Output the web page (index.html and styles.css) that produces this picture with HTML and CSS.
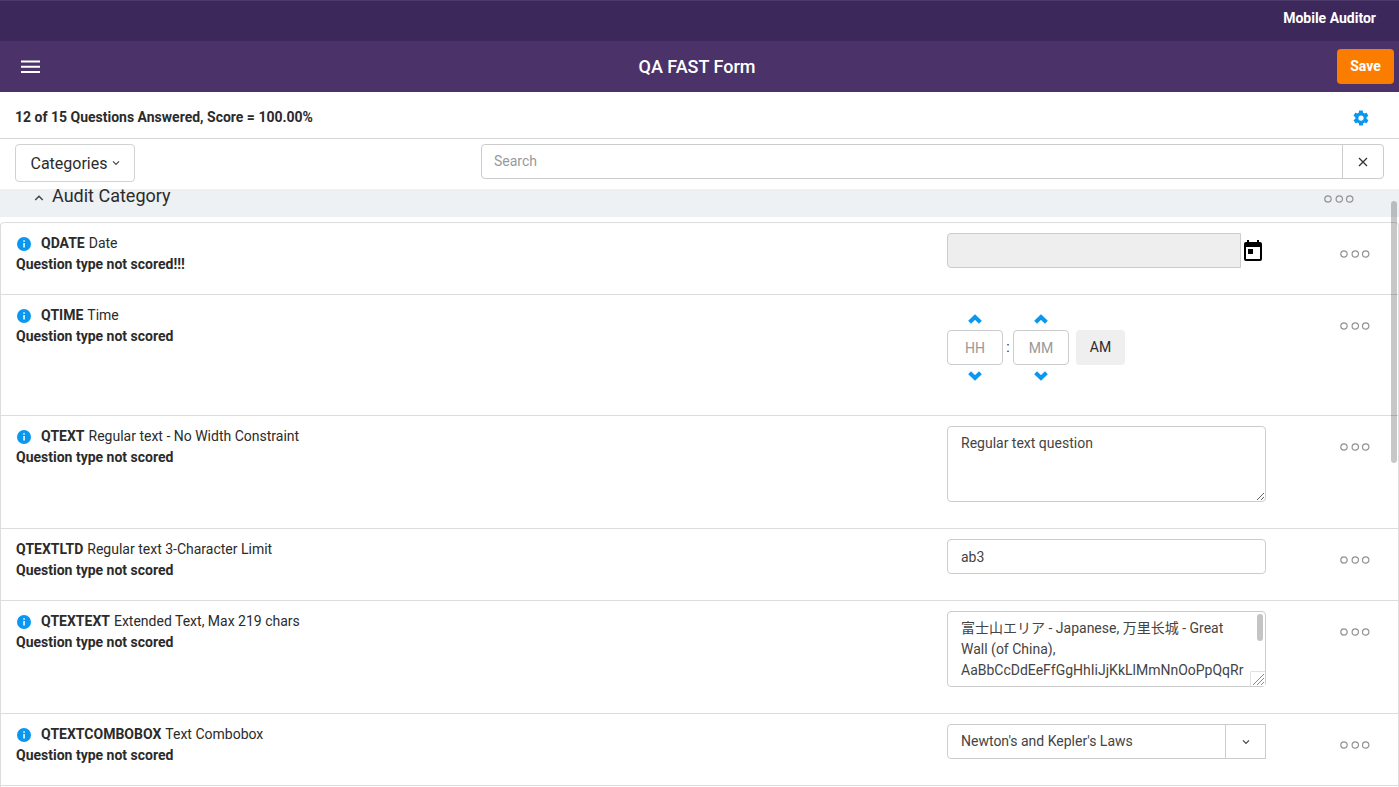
FILE: index.html
```html
<!DOCTYPE html>
<html lang="en">
<head>
    <meta charset="UTF-8">
    <meta name="viewport" content="width=device-width, initial-scale=1.0">
    <title>QA FAST Form</title>
    <link rel="stylesheet" href="styles.css">
</head>
<body>
    <svg class="sprite" width="0" height="0" aria-hidden="true">
        <symbol id="icon-info" viewBox="0 0 14 14">
            <circle cx="7" cy="7" r="7" fill="#0a97f0"/>
            <path d="M6.3 3.2h1.5v1.5H6.3zM6.3 6h1.5v4.4H6.3z" fill="#fff"/>
        </symbol>
        <symbol id="icon-more" viewBox="0 0 32 8">
            <g fill="none" stroke="#929292" stroke-width="1.2">
                <circle cx="4" cy="4" r="3.2"/>
                <circle cx="15.3" cy="4" r="3.2"/>
                <circle cx="25.7" cy="4" r="3.2"/>
            </g>
        </symbol>
        <symbol id="icon-down" viewBox="0 0 8 6">
            <path d="M1 1.4l3 3 3-3" fill="none" stroke="#444" stroke-width="1.2"/>
        </symbol>
        <symbol id="icon-step" viewBox="0 0 14 10">
            <path d="M1.600 8.300L7 3l5.400 5.300" fill="none" stroke="#0a97f0" stroke-width="4"/>
        </symbol>
    </svg>

    <header>
        <div class="topbar">Mobile Auditor</div>
        <div class="navbar">
            <button class="menu-button" aria-label="Menu">
                <svg width="20" height="14" viewBox="0 0 20 14"><path d="M0 1.500h19M0 6.700h19M0 11.900h19" stroke="#fff" stroke-width="2"/></svg>
            </button>
            <h1>QA FAST Form</h1>
            <button class="save-button">Save</button>
        </div>
    </header>

    <div class="status">
        <span>12 of 15 Questions Answered, Score = 100.00%</span>
        <button class="icon-button" aria-label="Settings">
            <svg width="18" height="18" viewBox="0 0 24 24"><path fill="#0a97f0" d="M19.4 13c0-.3.1-.6.1-1s0-.7-.1-1l2.100-1.600c.2-.2.300-.5.100-.7l-2-3.400c-.1-.2-.4-.3-.6-.2l-2.500 1c-.5-.4-1.100-.7-1.700-1l-.4-2.600c0-.3-.2-.5-.5-.5h-4c-.3 0-.5.2-.5.4l-.4 2.700c-.6.2-1.100.6-1.700 1l-2.500-1c-.2-.1-.5 0-.6.2l-2 3.400c-.1.2-.1.5.1.7L4.500 11c0 .3-.1.6-.1 1s0 .7.1 1l-2.100 1.600c-.2.200-.3.500-.1.700l2 3.400c.1.200.4.300.6.200l2.500-1c.5.400 1.100.700 1.700 1l.4 2.600c0 .3.2.5.5.5h4c.3 0 .5-.2.5-.4l.4-2.700c.6-.2 1.100-.6 1.700-1l2.500 1c.2.100.5 0 .6-.2l2-3.400c.1-.2.100-.5-.1-.7zM12 15.500a3.500 3.500 0 1 1 0-7 3.500 3.500 0 0 1 0 7z"/></svg>
        </button>
    </div>

    <div class="toolbar">
        <button class="categories-button">Categories <svg width="8" height="6"><use href="#icon-down"/></svg></button>
        <div class="search">
            <input type="text" placeholder="Search" aria-label="Search">
            <button aria-label="Clear search">
                <svg width="10" height="10" viewBox="0 0 10 10"><path d="M1 1l8 8M9 1L1 9" stroke="#333" stroke-width="1.3"/></svg>
            </button>
        </div>
    </div>

    <main>
        <div class="category">
            <svg class="flip" width="10" height="8"><use href="#icon-down"/></svg>
            <h2>Audit Category</h2>
            <button class="more" aria-label="Category actions"><svg width="32" height="8"><use href="#icon-more"/></svg></button>
        </div>

        <div class="questions">
            <div class="question">
                <label class="question-text" for="qdate">
                    <span class="question-title"><svg class="info" width="14" height="14"><use href="#icon-info"/></svg><b>QDATE</b> Date</span>
                    <b>Question type not scored!!!</b>
                </label>
                <div class="date-field">
                    <input class="field" id="qdate" type="text" readonly>
                    <button class="icon-button" aria-label="Pick a date">
                        <svg width="20" height="22" viewBox="0 0 20 22"><path fill-rule="evenodd" d="M4 0h2v2h8V0h2v2h1a2 2 0 0 1 2 2v15a2 2 0 0 1-2 2H3a2 2 0 0 1-2-2V4a2 2 0 0 1 2-2h1zM3 7v12h14V7zM5 9h5v5H5z"/></svg>
                    </button>
                </div>
                <button class="more" aria-label="QDATE actions"><svg width="32" height="8"><use href="#icon-more"/></svg></button>
            </div>

            <div class="question">
                <label class="question-text" for="qtime">
                    <span class="question-title"><svg class="info" width="14" height="14"><use href="#icon-info"/></svg><b>QTIME</b> Time</span>
                    <b>Question type not scored</b>
                </label>
                <div class="time-field">
                    <div class="stepper">
                        <button class="icon-button" aria-label="Hour up"><svg width="14" height="10"><use href="#icon-step"/></svg></button>
                        <input class="field" id="qtime" type="text" placeholder="HH">
                        <button class="icon-button" aria-label="Hour down"><svg class="flip" width="14" height="10"><use href="#icon-step"/></svg></button>
                    </div>
                    <span class="colon">:</span>
                    <div class="stepper">
                        <button class="icon-button" aria-label="Minute up"><svg width="14" height="10"><use href="#icon-step"/></svg></button>
                        <input class="field" type="text" placeholder="MM" aria-label="Minutes">
                        <button class="icon-button" aria-label="Minute down"><svg class="flip" width="14" height="10"><use href="#icon-step"/></svg></button>
                    </div>
                    <button class="ampm">AM</button>
                </div>
                <button class="more" aria-label="QTIME actions"><svg width="32" height="8"><use href="#icon-more"/></svg></button>
            </div>

            <div class="question">
                <label class="question-text" for="qtext">
                    <span class="question-title"><svg class="info" width="14" height="14"><use href="#icon-info"/></svg><b>QTEXT</b> Regular text - No Width Constraint</span>
                    <b>Question type not scored</b>
                </label>
                <textarea class="field" id="qtext">Regular text question</textarea>
                <button class="more" aria-label="QTEXT actions"><svg width="32" height="8"><use href="#icon-more"/></svg></button>
            </div>

            <div class="question">
                <label class="question-text" for="qtextltd">
                    <span class="question-title"><b>QTEXTLTD</b> Regular text 3-Character Limit</span>
                    <b>Question type not scored</b>
                </label>
                <input class="field" id="qtextltd" type="text" maxlength="3" value="ab3">
                <button class="more" aria-label="QTEXTLTD actions"><svg width="32" height="8"><use href="#icon-more"/></svg></button>
            </div>

            <div class="question">
                <label class="question-text" for="qtextext">
                    <span class="question-title"><svg class="info" width="14" height="14"><use href="#icon-info"/></svg><b>QTEXTEXT</b> Extended Text, Max 219 chars</span>
                    <b>Question type not scored</b>
                </label>
                <div class="long-text">
                    <textarea class="field" id="qtextext" maxlength="219">富士山エリア - Japanese, 万里长城 - Great Wall (of China), AaBbCcDdEeFfGgHhIiJjKkLlMmNnOoPpQqRr</textarea>
                    <span class="long-text-thumb"></span>
                    <svg class="long-text-grip" width="15" height="15" viewBox="0 0 15 15"><path d="M0 0h15v15H0z" fill="#fff"/><path d="M.5 15V.5H15" fill="none" stroke="#e2e2e2"/><path d="M3 14L14 3M7 14l7-7M11 14l3-3" stroke="#888"/></svg>
                </div>
                <button class="more" aria-label="QTEXTEXT actions"><svg width="32" height="8"><use href="#icon-more"/></svg></button>
            </div>

            <div class="question">
                <label class="question-text" for="qtextcombobox">
                    <span class="question-title"><svg class="info" width="14" height="14"><use href="#icon-info"/></svg><b>QTEXTCOMBOBOX</b> Text Combobox</span>
                    <b>Question type not scored</b>
                </label>
                <div class="combobox">
                    <select class="field" id="qtextcombobox">
                        <option>Newton's and Kepler's Laws</option>
                    </select>
                    <span class="combobox-arrow"><svg width="8" height="6"><use href="#icon-down"/></svg></span>
                </div>
                <button class="more" aria-label="QTEXTCOMBOBOX actions"><svg width="32" height="8"><use href="#icon-more"/></svg></button>
            </div>
        </div>
        <div class="scroll-thumb"></div>
    </main>
</body>
</html>
```
FILE: styles.css
```css
*, *:before, *:after {
    box-sizing: border-box;
}

body {
    display: flex;
    flex-direction: column;
    height: 100vh;
    margin: 0;
    overflow: hidden;
    background: #fff;
    color: #2b2b2b;
    font-family: Roboto, "Noto Sans CJK JP", sans-serif;
    font-size: 14px;
    line-height: 21px;
}

button, input, select, textarea {
    margin: 0;
    font: inherit;
    color: inherit;
}

button {
    padding: 0;
    border: 0;
    background: none;
    cursor: pointer;
}

svg {
    display: block;
}

.sprite {
    position: absolute;
}

.flip {
    transform: rotate(180deg);
}

.icon-button {
    display: flex;
    align-items: center;
    justify-content: center;
}

/* header */

.topbar {
    height: 41px;
    padding: 7px 23px;
    border-top: 1px solid #4d3969;
    background: #3d285b;
    color: #fff;
    font-weight: bold;
    text-align: right;
}

.navbar {
    display: grid;
    grid-template-columns: 1fr auto 1fr;
    align-items: center;
    height: 51px;
    padding: 0 5px 0 0;
    background: #4b336a;
    color: #fff;
}

.menu-button {
    justify-self: start;
    margin-left: 21px;
}

h1 {
    margin: 0;
    font-size: 18px;
    font-weight: 500;
}

.save-button {
    justify-self: end;
    width: 57px;
    height: 35px;
    border-radius: 4px;
    background: #fa7d00;
    font-weight: bold;
}

.status {
    display: flex;
    align-items: center;
    justify-content: space-between;
    height: 47px;
    padding: 5px 29px 0 15px;
    border-bottom: 1px solid #d4d4d4;
    font-weight: bold;
}

/* toolbar */

.toolbar {
    display: grid;
    grid-template-columns: 466fr 903fr;
    align-items: start;
    height: 50px;
    padding: 5px 15px 0;
}

.categories-button {
    display: flex;
    align-items: center;
    justify-content: center;
    justify-self: start;
    gap: 4px;
    width: 120px;
    height: 38px;
    border: 1px solid #d2d2d2;
    border-radius: 4px;
    font-size: 16px;
}

.search {
    display: flex;
    height: 35px;
    border: 1px solid #ccc;
    border-radius: 4px;
}

.search input {
    flex: 1;
    min-width: 0;
    padding: 0 12px;
    border: 0;
    background: none;
}

.search button {
    display: flex;
    align-items: center;
    justify-content: center;
    width: 41px;
    border-left: 1px solid #ccc;
}

::placeholder {
    color: #999;
    opacity: 1;
}

/* question list */

main {
    position: relative;
    flex: 1;
    min-height: 0;
    overflow: hidden;
}

.category {
    display: flex;
    align-items: center;
    gap: 8px;
    height: 28px;
    padding: 0 43px 14px 34px;
    background: #edf1f4;
}

.category h2 {
    flex: 1;
    margin: 0;
    font-size: 18px;
    font-weight: normal;
    line-height: 14px;
}

.category .flip {
    margin-top: 4px;
}

.category .more {
    margin-top: 6px;
}

.questions {
    min-height: 100%;
    margin-top: 5px;
    border: 1px solid #ddd;
    border-top: 0;
    border-radius: 4px;
}

.question {
    display: grid;
    grid-template-columns: minmax(0, 1fr) 319px 132px;
    align-items: start;
    padding: 10px 0 26px 15px;
    border-top: 1px solid #ddd;
}

.question:first-child {
    border-radius: 4px 4px 0 0;
}

.question:last-child {
    border-bottom: 1px solid #ddd;
}

.question-text {
    display: flex;
    flex-direction: column;
    height: 35px;
}

.question-title {
    display: flex;
    align-items: center;
    gap: 4px;
}

.info {
    margin: 0 6px 0 1px;
}

.question > .more {
    justify-self: center;
    margin: 17px 0 0 47px;
}

.field {
    display: block;
    width: 100%;
    height: 35px;
    padding: 6px 13px;
    border: 1px solid #ccc;
    border-radius: 4px;
    background: #fff;
    color: #444;
}

textarea.field {
    height: 76px;
    overflow: hidden;
    overflow-wrap: break-word;
}

.date-field {
    display: flex;
    gap: 2px;
}

.date-field .field {
    width: 294px;
    border-radius: 4px 0 0 4px;
    background: #eee;
}

.time-field {
    display: flex;
    align-items: center;
    height: 84px;
    padding: 3px 0 2px;
}

.stepper {
    width: 56px;
}

.stepper .field {
    padding: 0;
    text-align: center;
}

.stepper .icon-button {
    width: 100%;
    height: 22px;
}

.colon {
    width: 10px;
    text-align: center;
}

.ampm {
    width: 49px;
    height: 35px;
    margin-left: 7px;
    border-radius: 4px;
    background: #efefef;
}

.long-text,
.combobox {
    position: relative;
}

.long-text .field {
    resize: none;
}

.long-text-thumb {
    position: absolute;
    top: 3px;
    right: 3px;
    width: 6px;
    height: 27px;
    border-radius: 3px;
    background: #c4c4c4;
}

.long-text-grip {
    position: absolute;
    right: 1px;
    bottom: 1px;
}

.combobox .field {
    border-radius: 4px 0 0 4px;
    appearance: none;
}

.combobox-arrow {
    position: absolute;
    top: 0;
    right: 0;
    display: flex;
    align-items: center;
    justify-content: center;
    width: 41px;
    height: 35px;
    border: 1px solid #ccc;
    pointer-events: none;
}

.scroll-thumb {
    position: absolute;
    top: 12px;
    right: 2px;
    width: 6px;
    height: 262px;
    border-radius: 3px;
    background: rgba(0, 0, 0, 0.22);
}
```
